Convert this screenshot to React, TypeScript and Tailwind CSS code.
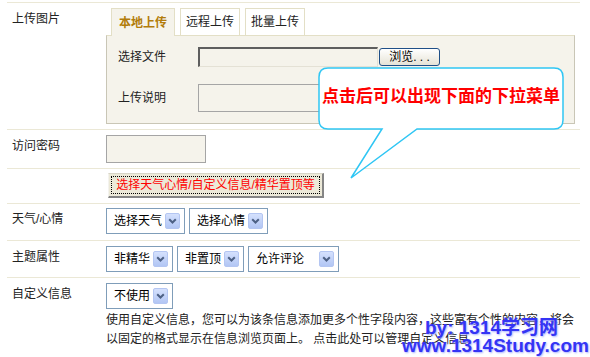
import React from "react";

function Arrow() {
  return (
    <span className="flex h-[16px] w-[15px] shrink-0 items-center justify-center rounded-[2px] border border-[#b4c6f2] bg-gradient-to-b from-[#d5e1fd] to-[#b2c6f4]">
      <svg width="9" height="6" viewBox="0 0 9 6">
        <path d="M1.2 1.2 L4.5 4.5 L7.8 1.2" stroke="#4d6185" strokeWidth="2" fill="none" />
      </svg>
    </span>
  );
}

function Sel({ cls, text }: { cls: string; text: string }) {
  return (
    <div
      className={`flex h-[26px] items-center justify-between border border-[#7f9db9] bg-white pl-[7px] pr-[4px] text-[12px] text-black ${cls}`}
    >
      <span>{text}</span>
      <Arrow />
    </div>
  );
}

export default function App() {
  return (
    <div className="relative h-[357px] w-[590px] overflow-hidden bg-white font-['Liberation_Sans','Noto_Sans_CJK_SC',sans-serif] text-[12px] leading-[18px] text-[#222]">
      <div className="ml-[7px] mt-[2px] w-[573px] border-t border-[#ebe8d6]">
        {/* Row 1: upload */}
        <div className="flex border-b border-[#ebe8d6] pb-[5px] pt-[5px]">
          <div className="w-[99px] shrink-0 pl-[5px] pt-[2px]">上传图片</div>
          <div>
            <div className="ml-[5px] flex h-[27px] gap-[5px]">
              <div className="relative z-10 flex h-[28px] w-[64px] items-center justify-center border border-b-0 border-[#e3dfc6] bg-[#f5f3eb] font-bold text-[#b27c0a]">
                本地上传
              </div>
              <div className="flex h-[27px] w-[60px] items-center justify-center border border-b-0 border-[#e3dfc6] bg-white">
                远程上传
              </div>
              <div className="flex h-[27px] w-[60px] items-center justify-center border border-b-0 border-[#e3dfc6] bg-white">
                批量上传
              </div>
            </div>
            <div className="h-[89px] w-[469px] border border-[#c9c6b6] border-t-[#e3dfc6] bg-[#f5f3eb] pl-[11px] pt-[11px]">
              <div className="flex h-[20px] items-center">
                <div className="w-[80px]">选择文件</div>
                <div className="h-[20px] w-[180px] border-b border-l-2 border-r border-t-2 border-b-[#e4e1d5] border-l-[#5e5e5e] border-r-[#e4e1d5] border-t-[#5e5e5e] bg-[#f5f3eb]" />
                <div className="ml-[1px] flex h-[18px] w-[61px] items-center justify-center rounded-[3px] border border-[#1f4f87] bg-gradient-to-b from-white to-[#e6e3d6] text-black">
                  浏览. . .
                </div>
              </div>
              <div className="mt-[17px] flex h-[28px] items-center">
                <div className="w-[80px]">上传说明</div>
                <div className="h-[28px] w-[240px] border border-[#a5a5a5] bg-[#f5f3eb]" />
              </div>
            </div>
          </div>
        </div>

        {/* Row 2: password */}
        <div className="flex border-b border-[#ebe8d6] pb-[5px] pt-[5px]">
          <div className="w-[99px] shrink-0 pl-[5px] pt-[2px]">访问密码</div>
          <div className="h-[28px] w-[100px] border border-[#a5a5a5] bg-[#f5f3eb]" />
        </div>

        {/* Row 3: button */}
        <div className="flex border-b border-[#ebe8d6] pb-[5px] pt-[4px]">
          <div className="w-[99px] shrink-0" />
          <div className="relative ml-[2px] flex h-[25px] w-[216px] items-center justify-center border border-b-2 border-r-2 border-b-[#858585] border-l-[#f4f3ee] border-r-[#858585] border-t-[#d8d5c8] bg-[#ece9d8] text-[#ff0000]">
            <span className="pointer-events-none absolute inset-[2px] border border-dotted border-black" />
            选择天气心情/自定义信息/精华置顶等
          </div>
        </div>

        {/* Row 4: weather */}
        <div className="flex border-b border-[#ebe8d6] pb-[6px] pt-[4px]">
          <div className="w-[99px] shrink-0 pl-[5px] pt-[2px]">天气/心情</div>
          <div className="flex gap-[4px]">
            <Sel cls="w-[79px]" text="选择天气" />
            <Sel cls="w-[79px]" text="选择心情" />
          </div>
        </div>

        {/* Row 5: topic */}
        <div className="flex border-b border-[#ebe8d6] pb-[5px] pt-[5px]">
          <div className="w-[99px] shrink-0 pl-[5px] pt-[2px]">主题属性</div>
          <div className="flex gap-[4px]">
            <Sel cls="w-[67px]" text="非精华" />
            <Sel cls="w-[67px]" text="非置顶" />
            <Sel cls="w-[91px]" text="允许评论" />
          </div>
        </div>

        {/* Row 6: custom info */}
        <div className="flex pt-[5px]">
          <div className="w-[99px] shrink-0 pl-[5px] pt-[2px]">自定义信息</div>
          <div>
            <Sel cls="w-[67px]" text="不使用" />
            <div className="mt-[2px] whitespace-nowrap leading-[19px] text-[#222]">
              使用自定义信息，您可以为该条信息添加更多个性字段内容，这些富有个性的内容，将会
              <br />
              以固定的格式显示在信息浏览页面上。 点击此处可以管理自定义信息
            </div>
          </div>
        </div>
      </div>

      {/* Callout bubble */}
      <svg className="pointer-events-none absolute left-0 top-0" width="590" height="357" viewBox="0 0 590 357">
        <path
          d="M328 68 H554 Q563 68 563 77 V120 Q563 129 554 129 H417 L351 178 L382 129 H328 Q319 129 319 120 V77 Q319 68 328 68 Z"
          fill="white"
          stroke="#2fc6f4"
          strokeWidth="1.5"
        />
      </svg>
      <div className="absolute left-[319px] top-[68px] flex h-[58px] w-[244px] items-center justify-center whitespace-nowrap text-[17px] font-bold leading-[20px] text-[#ff0000]">
        点击后可以出现下面的下拉菜单
      </div>

      {/* Watermark */}
      <div className="pointer-events-none absolute left-[425px] top-[318px] whitespace-nowrap font-['Liberation_Sans','Noto_Sans_CJK_SC',sans-serif] text-[19px] font-bold leading-[20px] text-[#3434f4] [text-shadow:1px_1px_2px_#aab0ff]">
        by: 1314学习网
      </div>
      <div className="pointer-events-none absolute left-[402px] top-[336px] whitespace-nowrap font-['Liberation_Sans',sans-serif] text-[19px] font-bold leading-[20px] text-[#3434f4] [text-shadow:1px_1px_2px_#aab0ff]">
        www.1314Study.com
      </div>
    </div>
  );
}
